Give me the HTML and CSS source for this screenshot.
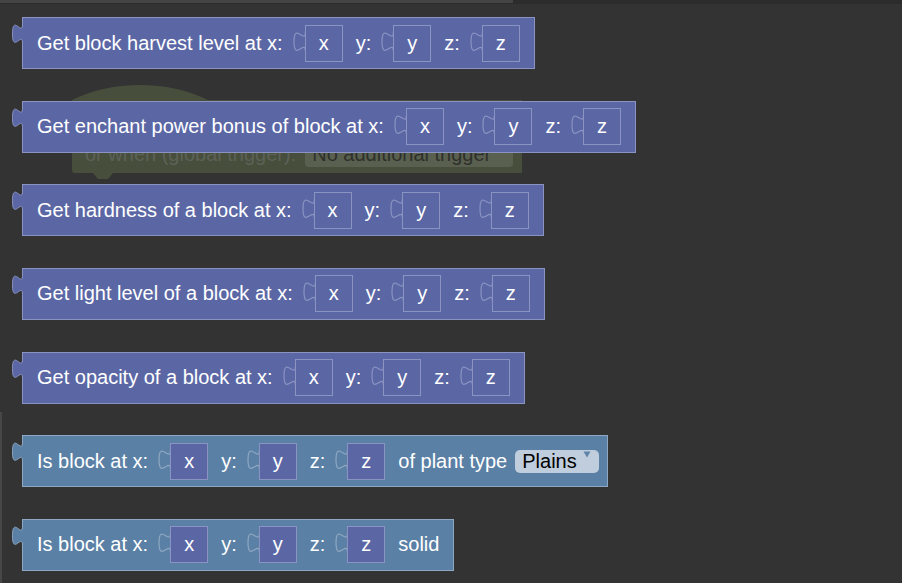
FILE: index.html
```html
<!DOCTYPE html>
<html>
<head>
<meta charset="utf-8">
<link rel="stylesheet" href="styles.css">
</head>
<body>
<div class="workspace">
  <div class="topbar"><div class="hthumb"></div></div>
  <div class="vthumb"></div>

  <div class="ghost">
    <svg class="ghost-shape" width="460" height="105" viewBox="0 0 460 105">
      <path d="M 0 16 c 40 -20 96 -20 136 0 H 450 V 89 H 41 l -5 6 h -10 l -5 -6 H 3 a 3 3 0 0 1 -3 -3 Z" fill="#474e3c"/>
    </svg>
    <div class="ghost-row">
      <span class="ghost-label">or when (global trigger):</span>
      <span class="ghost-field">No additional trigger</span>
    </div>
  </div>

  <div class="blocks">
    <div class="block purple">
      <svg class="tab" width="12" height="21" viewBox="0 0 12 21"><path class="tab-fill" d="M 12 0 H 10.5 c 0 13 -10 -10.4 -10 9.75 s 10 -3.25 10 9.75 H 12 Z"/><path class="tab-line" d="M 10.5 0 c 0 13 -10 -10.4 -10 9.75 s 10 -3.25 10 9.75"/></svg>
      <span class="label">Get block harvest level at x:</span>
      <span class="slot"><svg class="notch" width="12" height="37" viewBox="0 0 12 37"><path d="M 12.5 7 c 0 13 -11.5 -10.4 -11.5 9.75 s 11.5 -3.25 11.5 9.75"/></svg><span class="slot-box">x</span></span>
      <span class="label">y:</span>
      <span class="slot"><svg class="notch" width="12" height="37" viewBox="0 0 12 37"><path d="M 12.5 7 c 0 13 -11.5 -10.4 -11.5 9.75 s 11.5 -3.25 11.5 9.75"/></svg><span class="slot-box">y</span></span>
      <span class="label">z:</span>
      <span class="slot"><svg class="notch" width="12" height="37" viewBox="0 0 12 37"><path d="M 12.5 7 c 0 13 -11.5 -10.4 -11.5 9.75 s 11.5 -3.25 11.5 9.75"/></svg><span class="slot-box">z</span></span>
    </div>

    <div class="block purple">
      <svg class="tab" width="12" height="21" viewBox="0 0 12 21"><path class="tab-fill" d="M 12 0 H 10.5 c 0 13 -10 -10.4 -10 9.75 s 10 -3.25 10 9.75 H 12 Z"/><path class="tab-line" d="M 10.5 0 c 0 13 -10 -10.4 -10 9.75 s 10 -3.25 10 9.75"/></svg>
      <span class="label">Get enchant power bonus of block at x:</span>
      <span class="slot"><svg class="notch" width="12" height="37" viewBox="0 0 12 37"><path d="M 12.5 7 c 0 13 -11.5 -10.4 -11.5 9.75 s 11.5 -3.25 11.5 9.75"/></svg><span class="slot-box">x</span></span>
      <span class="label">y:</span>
      <span class="slot"><svg class="notch" width="12" height="37" viewBox="0 0 12 37"><path d="M 12.5 7 c 0 13 -11.5 -10.4 -11.5 9.75 s 11.5 -3.25 11.5 9.75"/></svg><span class="slot-box">y</span></span>
      <span class="label">z:</span>
      <span class="slot"><svg class="notch" width="12" height="37" viewBox="0 0 12 37"><path d="M 12.5 7 c 0 13 -11.5 -10.4 -11.5 9.75 s 11.5 -3.25 11.5 9.75"/></svg><span class="slot-box">z</span></span>
    </div>

    <div class="block purple">
      <svg class="tab" width="12" height="21" viewBox="0 0 12 21"><path class="tab-fill" d="M 12 0 H 10.5 c 0 13 -10 -10.4 -10 9.75 s 10 -3.25 10 9.75 H 12 Z"/><path class="tab-line" d="M 10.5 0 c 0 13 -10 -10.4 -10 9.75 s 10 -3.25 10 9.75"/></svg>
      <span class="label">Get hardness of a block at x:</span>
      <span class="slot"><svg class="notch" width="12" height="37" viewBox="0 0 12 37"><path d="M 12.5 7 c 0 13 -11.5 -10.4 -11.5 9.75 s 11.5 -3.25 11.5 9.75"/></svg><span class="slot-box">x</span></span>
      <span class="label">y:</span>
      <span class="slot"><svg class="notch" width="12" height="37" viewBox="0 0 12 37"><path d="M 12.5 7 c 0 13 -11.5 -10.4 -11.5 9.75 s 11.5 -3.25 11.5 9.75"/></svg><span class="slot-box">y</span></span>
      <span class="label">z:</span>
      <span class="slot"><svg class="notch" width="12" height="37" viewBox="0 0 12 37"><path d="M 12.5 7 c 0 13 -11.5 -10.4 -11.5 9.75 s 11.5 -3.25 11.5 9.75"/></svg><span class="slot-box">z</span></span>
    </div>

    <div class="block purple">
      <svg class="tab" width="12" height="21" viewBox="0 0 12 21"><path class="tab-fill" d="M 12 0 H 10.5 c 0 13 -10 -10.4 -10 9.75 s 10 -3.25 10 9.75 H 12 Z"/><path class="tab-line" d="M 10.5 0 c 0 13 -10 -10.4 -10 9.75 s 10 -3.25 10 9.75"/></svg>
      <span class="label">Get light level of a block at x:</span>
      <span class="slot"><svg class="notch" width="12" height="37" viewBox="0 0 12 37"><path d="M 12.5 7 c 0 13 -11.5 -10.4 -11.5 9.75 s 11.5 -3.25 11.5 9.75"/></svg><span class="slot-box">x</span></span>
      <span class="label">y:</span>
      <span class="slot"><svg class="notch" width="12" height="37" viewBox="0 0 12 37"><path d="M 12.5 7 c 0 13 -11.5 -10.4 -11.5 9.75 s 11.5 -3.25 11.5 9.75"/></svg><span class="slot-box">y</span></span>
      <span class="label">z:</span>
      <span class="slot"><svg class="notch" width="12" height="37" viewBox="0 0 12 37"><path d="M 12.5 7 c 0 13 -11.5 -10.4 -11.5 9.75 s 11.5 -3.25 11.5 9.75"/></svg><span class="slot-box">z</span></span>
    </div>

    <div class="block purple">
      <svg class="tab" width="12" height="21" viewBox="0 0 12 21"><path class="tab-fill" d="M 12 0 H 10.5 c 0 13 -10 -10.4 -10 9.75 s 10 -3.25 10 9.75 H 12 Z"/><path class="tab-line" d="M 10.5 0 c 0 13 -10 -10.4 -10 9.75 s 10 -3.25 10 9.75"/></svg>
      <span class="label">Get opacity of a block at x:</span>
      <span class="slot"><svg class="notch" width="12" height="37" viewBox="0 0 12 37"><path d="M 12.5 7 c 0 13 -11.5 -10.4 -11.5 9.75 s 11.5 -3.25 11.5 9.75"/></svg><span class="slot-box">x</span></span>
      <span class="label">y:</span>
      <span class="slot"><svg class="notch" width="12" height="37" viewBox="0 0 12 37"><path d="M 12.5 7 c 0 13 -11.5 -10.4 -11.5 9.75 s 11.5 -3.25 11.5 9.75"/></svg><span class="slot-box">y</span></span>
      <span class="label">z:</span>
      <span class="slot"><svg class="notch" width="12" height="37" viewBox="0 0 12 37"><path d="M 12.5 7 c 0 13 -11.5 -10.4 -11.5 9.75 s 11.5 -3.25 11.5 9.75"/></svg><span class="slot-box">z</span></span>
    </div>

    <div class="block steel">
      <svg class="tab" width="12" height="21" viewBox="0 0 12 21"><path class="tab-fill" d="M 12 0 H 10.5 c 0 13 -10 -10.4 -10 9.75 s 10 -3.25 10 9.75 H 12 Z"/><path class="tab-line" d="M 10.5 0 c 0 13 -10 -10.4 -10 9.75 s 10 -3.25 10 9.75"/></svg>
      <span class="label">Is block at x:</span>
      <span class="slot"><svg class="notch" width="12" height="37" viewBox="0 0 12 37"><path d="M 12.5 7 c 0 13 -11.5 -10.4 -11.5 9.75 s 11.5 -3.25 11.5 9.75"/></svg><span class="slot-box">x</span></span>
      <span class="label">y:</span>
      <span class="slot"><svg class="notch" width="12" height="37" viewBox="0 0 12 37"><path d="M 12.5 7 c 0 13 -11.5 -10.4 -11.5 9.75 s 11.5 -3.25 11.5 9.75"/></svg><span class="slot-box">y</span></span>
      <span class="label">z:</span>
      <span class="slot"><svg class="notch" width="12" height="37" viewBox="0 0 12 37"><path d="M 12.5 7 c 0 13 -11.5 -10.4 -11.5 9.75 s 11.5 -3.25 11.5 9.75"/></svg><span class="slot-box">z</span></span>
      <span class="label tight">of plant type</span>
      <span class="dropdown">Plains<svg class="arrow" width="8" height="7" viewBox="0 0 8 7"><path d="M 0.5 0.5 H 7.5 L 4 6.5 Z"/></svg></span>
    </div>

    <div class="block steel">
      <svg class="tab" width="12" height="21" viewBox="0 0 12 21"><path class="tab-fill" d="M 12 0 H 10.5 c 0 13 -10 -10.4 -10 9.75 s 10 -3.25 10 9.75 H 12 Z"/><path class="tab-line" d="M 10.5 0 c 0 13 -10 -10.4 -10 9.75 s 10 -3.25 10 9.75"/></svg>
      <span class="label">Is block at x:</span>
      <span class="slot"><svg class="notch" width="12" height="37" viewBox="0 0 12 37"><path d="M 12.5 7 c 0 13 -11.5 -10.4 -11.5 9.75 s 11.5 -3.25 11.5 9.75"/></svg><span class="slot-box">x</span></span>
      <span class="label">y:</span>
      <span class="slot"><svg class="notch" width="12" height="37" viewBox="0 0 12 37"><path d="M 12.5 7 c 0 13 -11.5 -10.4 -11.5 9.75 s 11.5 -3.25 11.5 9.75"/></svg><span class="slot-box">y</span></span>
      <span class="label">z:</span>
      <span class="slot"><svg class="notch" width="12" height="37" viewBox="0 0 12 37"><path d="M 12.5 7 c 0 13 -11.5 -10.4 -11.5 9.75 s 11.5 -3.25 11.5 9.75"/></svg><span class="slot-box">z</span></span>
      <span class="label last">solid</span>
    </div>
  </div>
</div>
</body>
</html>
```

FILE: styles.css
```css
html, body {
  margin: 0;
  padding: 0;
  background: #333333;
}

.workspace {
  position: relative;
  width: 902px;
  height: 583px;
  overflow: hidden;
  background: #333333;
  font-family: "Liberation Sans", Arial, sans-serif;
  font-size: 20px;
}

.topbar {
  position: absolute;
  top: 0;
  left: 0;
  right: 0;
  height: 4px;
  background: #2c2c2c;
  z-index: 5;
}

.hthumb {
  width: 513px;
  height: 3px;
  background: #444444;
}

.vthumb {
  position: absolute;
  left: 0;
  top: 412px;
  bottom: 0;
  width: 2px;
  background: #474747;
  z-index: 5;
}

/* faded event block lying underneath */
.ghost {
  position: absolute;
  left: 72px;
  top: 84px;
  width: 460px;
  height: 105px;
  z-index: 0;
}

.ghost-shape {
  position: absolute;
  left: 0;
  top: 0;
}

.ghost-row {
  position: absolute;
  left: 0;
  top: 58px;
  height: 25px;
  display: flex;
  align-items: center;
  padding-left: 13px;
}

.ghost-label {
  color: #5c6156;
  white-space: nowrap;
  margin-right: 9px;
}

.ghost-field {
  width: 208px;
  height: 25px;
  box-sizing: border-box;
  padding-left: 7px;
  line-height: 25px;
  background: #5a604f;
  border-radius: 4px;
  color: #2e302b;
  white-space: nowrap;
}

/* block stack */
.blocks {
  position: relative;
  z-index: 1;
  display: flex;
  flex-direction: column;
  align-items: flex-start;
  gap: 31.67px;
  padding: 17px 0 0 22px;
}

.block {
  position: relative;
  display: flex;
  align-items: center;
  box-sizing: border-box;
  height: 52px;
  padding: 0 14px 0 14px;
  border: 1px solid;
  color: #ffffff;
  white-space: nowrap;
}

.purple {
  background: #5b67a5;
  border-color: #8b93c2;
}

.steel {
  background: #5b80a5;
  border-color: #8ea7c2;
}

.tab {
  position: absolute;
  left: -11px;
  top: 6px;
  overflow: visible;
}

.purple .tab-fill { fill: #5b67a5; }
.steel .tab-fill { fill: #5b80a5; }

.tab-line {
  fill: none;
  stroke-width: 1;
}

.purple .tab-line { stroke: #8b93c2; }
.steel .tab-line { stroke: #8ea7c2; }

.label {
  margin-right: 10px;
}

.label.tight {
  margin-right: 8px;
}

.label.last {
  margin-right: 0;
}

.slot {
  display: flex;
  align-items: stretch;
  height: 37px;
  margin-right: 13px;
}

.slot:last-child {
  margin-right: 0;
}

.notch {
  overflow: visible;
}

.notch path {
  fill: none;
  stroke-width: 1.2;
}

.purple .notch path { stroke: #8b93c2; }
.steel .notch path { stroke: #8ea7c2; }

.slot-box {
  box-sizing: border-box;
  width: 38px;
  height: 37px;
  display: flex;
  align-items: center;
  justify-content: center;
  background: #5b67a5;
  border: 1px solid #8b93c2;
  color: #ffffff;
}

.dropdown {
  position: relative;
  box-sizing: border-box;
  width: 84px;
  height: 23px;
  padding-left: 7px;
  margin-right: -6px;
  line-height: 23px;
  background: #bfcddc;
  border-radius: 5px;
  color: #000000;
}

.arrow {
  position: absolute;
  right: 8px;
  top: 1px;
}

.arrow path {
  fill: #5f84aa;
}
```
